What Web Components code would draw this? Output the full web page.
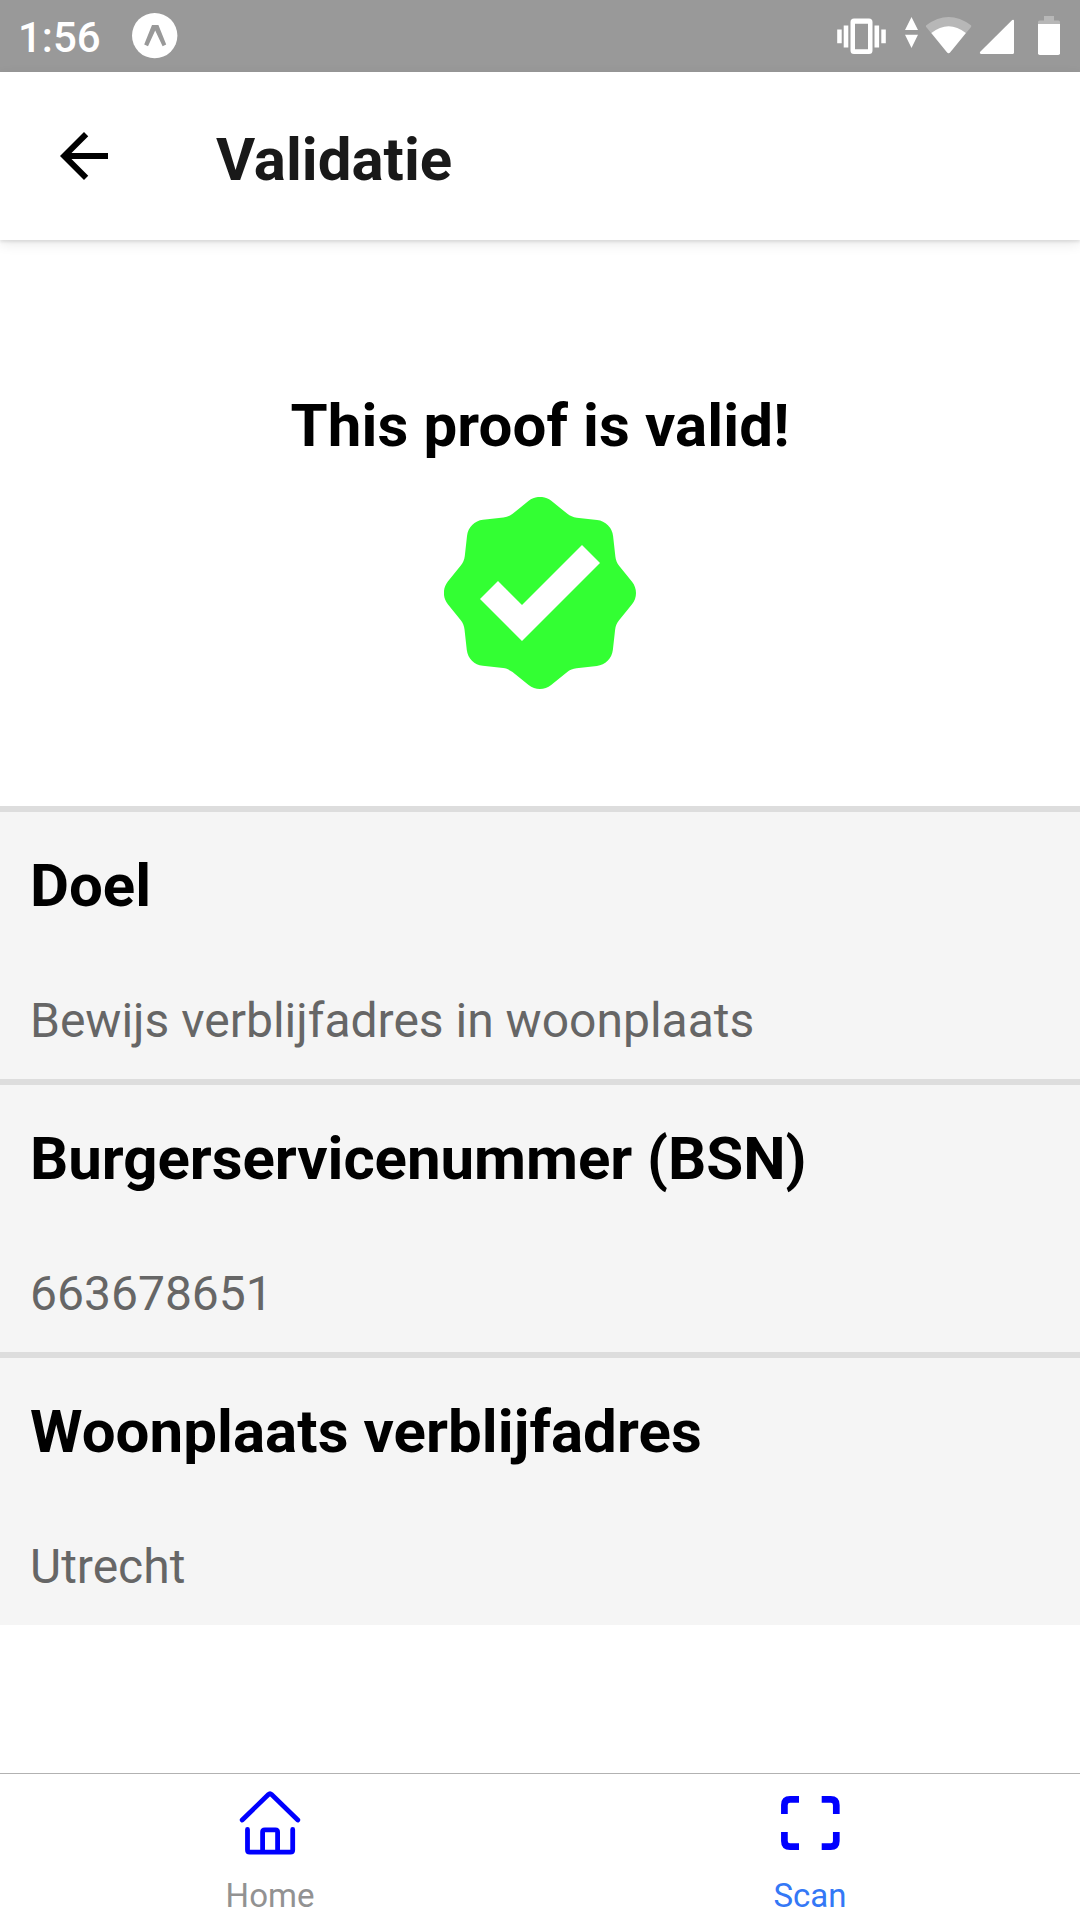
<!DOCTYPE html>
<html lang="nl">
<head>
<meta charset="utf-8">
<title>Validatie</title>
<style>
html,body{margin:0;padding:0;background:#fff}
body{font-family:Roboto,"Liberation Sans",sans-serif;width:1080px;height:1920px;overflow:hidden}
</style>
</head>
<body>
<validation-app></validation-app>
<script>
const define = (name, html) => {
  const template = document.createElement('template');
  template.innerHTML = html;
  customElements.define(name, class extends HTMLElement {
    constructor() {
      super();
      this.attachShadow({ mode: 'open' }).appendChild(template.content.cloneNode(true));
    }
  });
};

define('status-bar', `
<style>
:host{display:flex;align-items:flex-start;justify-content:space-between;height:72px;background:#999;color:#fff;flex:none}
.left{display:flex;padding-left:18px}
.time{font-size:42px;font-weight:500;line-height:50px;padding-top:13px;width:114px;box-sizing:border-box;white-space:nowrap}
svg{display:block}
</style>
<div class="left"><span class="time"><slot></slot></span>
<svg width="46" height="72" viewBox="132 0 46 72"><circle cx="154.7" cy="35.6" r="22.7" fill="#fff"/><path d="M152 25h6.4L166.2 44.6 162.6 46.3 155.2 30.4 148 46.3 144.2 44.6Z" fill="#999"/></svg></div>
<svg width="250" height="72" viewBox="830 0 250 72" fill="#fff">
<path fill-rule="evenodd" d="M854 18.5h15a3.5 3.5 0 0 1 3.5 3.5v28.5a3.5 3.5 0 0 1-3.5 3.5h-15a3.5 3.5 0 0 1-3.5-3.5V22a3.5 3.5 0 0 1 3.5-3.5ZM855 23.7v25.6h13V23.7Z"/>
<path d="M843.7 25.4h4.6v22.2h-4.6ZM837.2 29.5h4.5v13.8h-4.5ZM874.5 25.4h4.6v22.2h-4.6ZM881.3 29.5h4.5v13.8h-4.5Z"/>
<path d="M911.5 17 918 30h-13ZM905 34.8h13L911.5 48Z"/>
<path opacity=".3" d="M926.3 25.2Q948.6 8.8 970.9 25.2 971.8 26 971 27L950 52.6Q948.6 54 947.2 52.6L926.2 27Q925.4 26 926.3 25.2Z"/>
<path d="M931.3 33Q948.6 19.4 965.9 33L950 52.6Q948.6 54 947.2 52.6Z"/>
<path d="M1012.2 20Q1014 19.2 1014 21V52.5Q1014 54 1012.5 54H981Q979.2 53.6 980 52Z"/>
<path opacity=".3" d="M1044 16h10v4.5h4.5q1.5 0 1.5 1.5v2h-22v-2q0-1.5 1.5-1.5h4.5Z"/>
<path d="M1038 24h22v29.2q0 1.8-1.8 1.8h-18.4q-1.8 0-1.8-1.8Z"/>
</svg>`);

define('app-header', `
<style>
:host{display:flex;align-items:flex-start;height:168px;background:#fff;flex:none;position:relative;
 box-shadow:0 2px 3px rgba(0,0,0,.09),0 4px 12px rgba(0,0,0,.09);color:#191919}
svg{display:block;margin:48px 96px 0 48px}
h1{margin:0;padding-top:53px;font-size:60px;line-height:70px;font-weight:700}
</style>
<svg width="72" height="72" viewBox="0 0 24 24"><path d="M20 11H7.83l5.59-5.59L12 4l-8 8 8 8 1.41-1.41L7.83 13H20v-2z" fill="#000"/></svg>
<h1><slot></slot></h1>`);

define('proof-result', `
<style>
:host{display:flex;flex-direction:column;align-items:center;height:566px;flex:none;color:#000}
h2{margin:0;padding-top:151px;font-size:60px;line-height:70px;font-weight:700;letter-spacing:.12px}
svg{display:block;margin-top:35.67px}
</style>
<h2><slot></slot></h2>
<svg width="192" height="192" viewBox="0 0 16 16"><path fill="#33ff33" fill-rule="evenodd" d="M15.67 7.06l-1.08-1.34c-.17-.22-.28-.48-.31-.77l-.19-1.7a1.51 1.51 0 0 0-1.33-1.33l-1.7-.19c-.3-.03-.56-.16-.78-.33L8.94.32c-.55-.44-1.33-.44-1.88 0L5.72 1.4c-.22.17-.48.28-.77.31l-1.7.19c-.7.08-1.25.63-1.33 1.33l-.19 1.7c-.03.3-.16.56-.33.78L.32 7.05c-.44.55-.44 1.33 0 1.88l1.08 1.34c.17.22.28.48.31.77l.19 1.7c.08.7.63 1.25 1.33 1.33l1.7.19c.3.03.56.16.78.33l1.34 1.08c.55.44 1.33.44 1.88 0l1.34-1.08c.22-.17.48-.28.77-.31l1.7-.19c.7-.08 1.25-.63 1.33-1.33l.19-1.7c.03-.3.16-.56.33-.78l1.08-1.34c.44-.55.44-1.33 0-1.88zM6.5 12L3 8.5 4.5 7l2 2 5-5L13 5.5 6.5 12z"/></svg>`);

define('proof-field', `
<style>
:host{display:flex;flex-direction:column;box-sizing:border-box;height:273px;padding:39px 30px 0;gap:72px;border-top:6px solid #ddd;background:#f5f5f5;flex:none}
.label{font-size:60px;line-height:70px;font-weight:700;color:#000;letter-spacing:var(--label-spacing,0)}
.value{font-size:48px;line-height:56px;color:#666}
</style>
<div class="label"><slot name="label"></slot></div>
<div class="value"><slot></slot></div>`);

define('tab-item', `
<style>
:host{display:flex;flex:1;flex-direction:column;align-items:center;color:#929292;font-size:33px;line-height:40px}
:host([active]){color:#3478f6}
.icon{height:102px}
</style>
<div class="icon"><slot name="icon"></slot></div>
<span><slot></slot></span>`);

define('tab-bar', `
<style>
:host{display:flex;box-sizing:border-box;height:147px;border-top:1px solid #b2b2b2;background:#fff;flex:none}
svg{display:block}
</style>
<tab-item><svg slot="icon" width="80" height="102" viewBox="230 1774 80 102" fill="none" stroke="#00f" stroke-width="4.8" stroke-linecap="round" stroke-linejoin="round"><path d="M242.2 1820 268.4 1794.5Q270 1793 271.6 1794.5L297.8 1820M247.5 1829.5V1850Q247.5 1852.2 249.7 1852.2H290.5Q292.7 1852.2 292.7 1850V1829.5M262.6 1852V1832Q262.6 1829.8 264.8 1829.8H275.4Q277.6 1829.8 277.6 1832V1852"/></svg>Home</tab-item>
<tab-item active><svg slot="icon" width="80" height="102" viewBox="770 1774 80 102" fill="none" stroke="#00f" stroke-width="6.7"><path d="M784.4 1814V1805Q784.4 1799.4 790 1799.4H799M821.7 1799.4H830.7Q836.3 1799.4 836.3 1805V1814M784.4 1832V1841Q784.4 1846.6 790 1846.6H799M821.7 1846.6H830.7Q836.3 1846.6 836.3 1841V1832"/></svg>Scan</tab-item>`);

define('validation-app', `
<style>
:host{display:flex;flex-direction:column;width:1080px;height:1920px;background:#fff}
main{flex:1;display:flex;flex-direction:column}
.bsn{--label-spacing:-.05px}
.city{--label-spacing:.06px}
</style>
<status-bar>1:56</status-bar>
<app-header>Validatie</app-header>
<main>
<proof-result>This proof is valid!</proof-result>
<proof-field><span slot="label">Doel</span>Bewijs verblijfadres in woonplaats</proof-field>
<proof-field class="bsn"><span slot="label">Burgerservicenummer (BSN)</span>663678651</proof-field>
<proof-field class="city"><span slot="label">Woonplaats verblijfadres</span>Utrecht</proof-field>
</main>
<tab-bar></tab-bar>`);
</script>
</body>
</html>
